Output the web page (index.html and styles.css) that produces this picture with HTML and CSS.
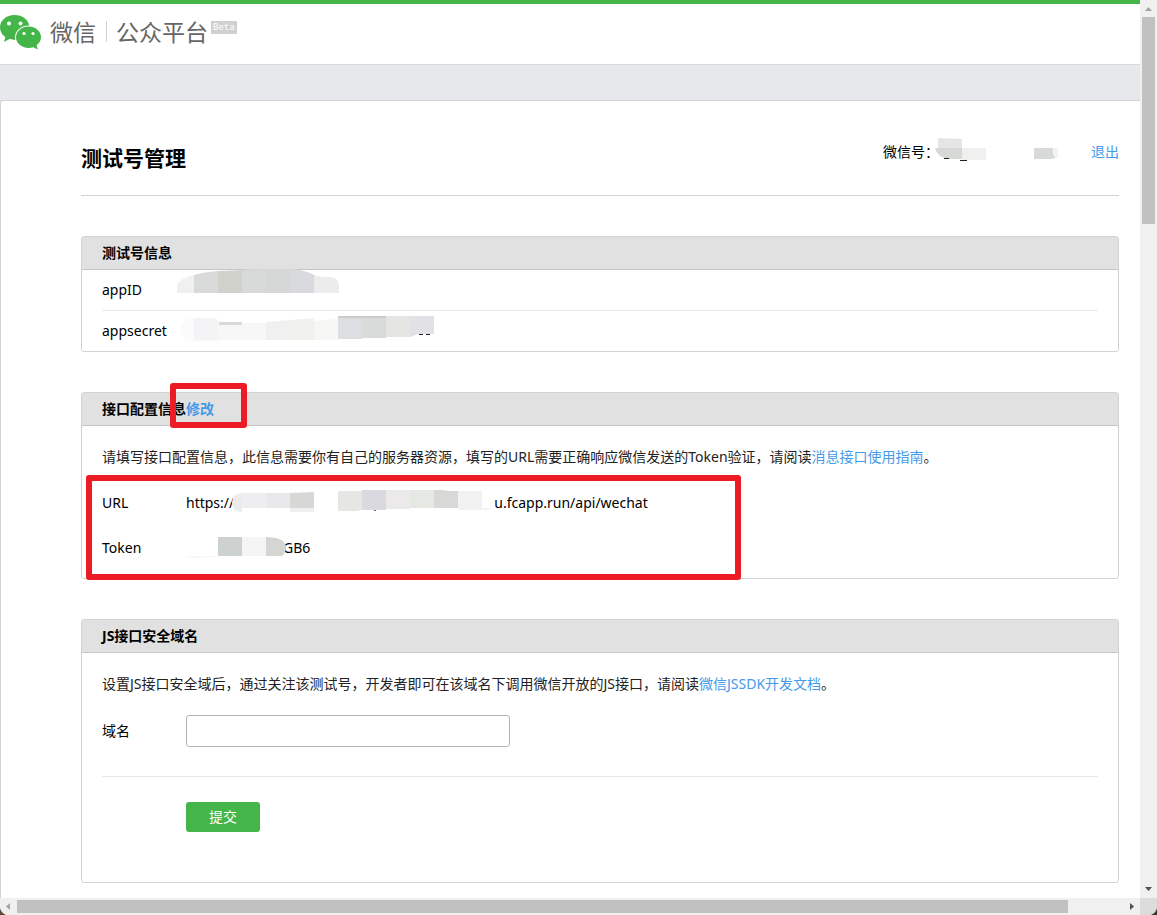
FILE: index.html
```html
<!DOCTYPE html>
<html lang="zh-CN">
<head>
<meta charset="utf-8">
<title>微信公众平台 - 测试号管理</title>
<link rel="stylesheet" href="styles.css">
</head>
<body>
<div class="window">
  <div class="viewport">
    <header class="topbar">
      <svg class="logo" width="41" height="35" viewBox="0 0 41 35" aria-hidden="true">
        <path class="logo-fill" d="M14.500 0C6.200 0 0 5.500 0 12.500c0 4 2.100 7.300 5.300 9.600L4 27l5.500-3c2 .6 3.500.8 5.500.8h1.500L29.500 11.500C28.500 4.500 22.500 0 14.500 0z"/>
        <path class="logo-fill logo-front" d="M28.500 11.500C21.500 11.500 16 16.400 16 22.300S21.500 33 28.500 33c1.700 0 3.200-.2 4.600-.7L37.800 34.500l-1.200-4.200c2.700-2 4.400-4.800 4.400-8C41 16.400 35.500 11.500 28.500 11.500z"/>
        <circle class="logo-eye" cx="9" cy="8.500" r="2"/><circle class="logo-eye" cx="20.500" cy="8.500" r="2"/>
        <circle class="logo-eye" cx="24" cy="18.500" r="1.600"/><circle class="logo-eye" cx="33" cy="18.500" r="1.600"/>
      </svg>
      <span class="brand">微信</span>
      <span class="product">公众平台</span>
      <span class="beta">Beta</span>
    </header>
    <main class="card">
      <div class="page-head">
        <h1>测试号管理</h1>
        <div class="account">
          <span>微信号：</span>
          <span class="account-id">
            <svg class="mask mask-account" width="124" height="26" viewBox="0 0 124 26" aria-hidden="true">
              <path fill="#e4e5e4" d="M3 1L27 2V22H14Q3 20 3 16z"/>
              <path fill="#d7d9d7" d="M0 11H27V22H14Q2 20 0 11z"/>
              <path fill="#f0f0ef" d="M27 11H51V23H27z"/>
              <path stroke="#222" d="M9 21.500h5M25 23.500h7"/>
              <path fill="#d8dad9" d="M99 11H118Q117 18 121 21L117 22H99z"/>
              <path fill="#f2f3f2" d="M118 11H123V21H121Q117 18 118 11z"/>
            </svg>
          </span>
          <a href="#logout">退出</a>
        </div>
      </div>

      <section class="panel">
        <h2>测试号信息</h2>
        <dl class="info">
          <div class="info-row">
            <dt>appID</dt>
            <dd>
              <svg class="mask mask-appid" width="166" height="26" viewBox="0 0 166 26" aria-hidden="true">
                <path fill="#f0f0f0" d="M1 24V17Q3 9 19 6V24z"/>
                <path fill="#d9dada" d="M18 6Q28 3 42 2V24H18z"/>
                <path fill="#d1d2cc" d="M42 2L66 1V24H42z"/>
                <path fill="#d8dada" d="M66 1Q78 0 90 0V24H66z"/>
                <path fill="#d5d8d7" d="M90 0H114V24H90z"/>
                <path fill="#d9dadd" d="M114 0Q130 1 138 6V24H114z"/>
                <path fill="#ececec" d="M138 6Q145 8 148 8Q163 6 163 18V24H138z"/>
              </svg>
            </dd>
          </div>
          <div class="info-row">
            <dt>appsecret</dt>
            <dd>
              <svg class="mask mask-secret" width="260" height="30" viewBox="0 0 260 30" aria-hidden="true">
                <path fill="#fbfbfb" d="M10 3H34Q43 5 40 12V27H14Q2 26 0 15Q2 5 10 3z"/>
                <path fill="#f4f4f7" d="M14 3H35L38 7V25H14z"/>
                <path fill="#f7f7f7" d="M38 8H86V25H38z"/>
                <path fill="#d9dadb" d="M39 7H62V10H39z"/>
                <path fill="#f0f0f0" d="M86 7L110 5V25H86z"/>
                <path fill="#f1f1ed" d="M110 5L134 3V25H110z"/>
                <path fill="#f6f6f4" d="M134 6L158 4V25H134z"/>
                <path fill="#dddee1" d="M158 1H182V24H158z"/>
                <path fill="#d9dbdb" d="M182 1H206V23H182z"/>
                <path fill="#e5e5e3" d="M206 1H230V22H206z"/>
                <path fill="#e1e1e6" d="M230 1H254V19H238L230 22z"/>
                <path stroke="#c9cbcd" stroke-width="2" d="M158 2H206"/>
                <path stroke="#222" d="M239 19.500h4M246 19.500h4"/>
              </svg>
            </dd>
          </div>
        </dl>
      </section>

      <section class="panel panel-config">
        <h2>接口配置信息<a class="edit" href="#edit">修改<span class="marker marker-edit"></span></a></h2>
        <div class="panel-body">
          <p>请填写接口配置信息，此信息需要你有自己的服务器资源，填写的URL需要正确响应微信发送的Token验证，请阅读<a href="#guide">消息接口使用指南</a>。</p>
          <dl class="config">
            <div class="field">
              <dt>URL</dt>
              <dd class="url">
                <span>https://</span>
                <span>u.fcapp.run/api/wechat</span>
                <svg class="mask mask-url" width="262" height="24" viewBox="0 0 262 24" aria-hidden="true">
                  <path fill="#ececec" d="M10 3V22Q0 22 0 12Q0 4 10 3z"/>
                  <path fill="#eeeef1" d="M10 3H34V18H10z"/>
                  <path fill="#e9e9eb" d="M34 3H58V18H34z"/>
                  <path fill="#d7d7d5" d="M58 3L82 2V18H58z"/>
                  <path fill="#edf0ef" d="M58 18H82V22H58z"/>
                  <path fill="#e6e6e4" d="M106 1H130V20L124 21H106z"/>
                  <path fill="#d9d9df" d="M130 0H154V20H130z"/>
                  <path fill="#ebe9ea" d="M154 0H178V19H154z"/>
                  <path fill="#e6e8e3" d="M178 0H202V18H178z"/>
                  <path fill="#d8d8d6" d="M202 0H210L218 1H226V18H202z"/>
                  <path fill="#f2f2f2" d="M226 1H250V18H260L254 20H226z"/>
                  <path fill="#3874a8" d="M142 20H144V21H142z"/>
                </svg>
              </dd>
            </div>
            <div class="field">
              <dt>Token</dt>
              <dd class="token">
                <span>GB6</span>
                <svg class="mask mask-token" width="103" height="24" viewBox="0 0 103 24" aria-hidden="true">
                  <path fill="#f7f7f7" d="M0 20H34V21L7 22z"/>
                  <path fill="#cdd2d0" d="M34 1H58V20H34z"/>
                  <path fill="#f5f5f6" d="M58 1H82V20H58z"/>
                  <path fill="#d5d6d4" d="M82 1Q101 1 102 11Q102 17 98 20H82z"/>
                </svg>
              </dd>
            </div>
            <div class="marker marker-fields"></div>
          </dl>
        </div>
      </section>

      <section class="panel">
        <h2>JS接口安全域名</h2>
        <form class="panel-body">
          <p>设置JS接口安全域后，通过关注该测试号，开发者即可在该域名下调用微信开放的JS接口，请阅读<a href="#jssdk">微信JSSDK开发文档</a>。</p>
          <div class="domain">
            <label for="domain">域名</label>
            <input id="domain" type="text">
          </div>
          <div class="actions">
            <button type="button">提交</button>
          </div>
        </form>
      </section>
    </main>
  </div>

  <div class="scroll scroll-v" aria-hidden="true">
    <svg width="17" height="17" viewBox="0 0 17 17"><path fill="#a3a3a3" d="M5 11L8.500 7L12 11z"/></svg>
    <div class="track"><div class="thumb"></div></div>
    <svg width="17" height="17" viewBox="0 0 17 17"><path fill="#505050" d="M5 6H12L8.500 10z"/></svg>
  </div>
  <div class="scroll scroll-h" aria-hidden="true">
    <svg width="17" height="17" viewBox="0 0 17 17"><path fill="#5b4a35" d="M0 10Q1 15 6 17H0z"/><path fill="#a3a3a3" d="M10 5V12L6 8.500z"/></svg>
    <div class="track"><div class="thumb"></div></div>
    <svg width="17" height="17" viewBox="0 0 17 17"><path fill="#505050" d="M7 5V12L11 8.500z"/></svg>
  </div>
  <svg class="corner" width="17" height="17" viewBox="0 0 17 17" aria-hidden="true"><path fill="#3b3234" d="M17 10Q16 15 11 17H17z"/></svg>
</div>
</body>
</html>
```
FILE: styles.css
```css
* {
  box-sizing: border-box;
}

body {
  margin: 0;
  font-family: "Noto Sans", "Noto Sans CJK SC", sans-serif;
  font-size: 14px;
  line-height: 20px;
  color: #000;
}

h1, h2, p, dl, dd {
  margin: 0;
}

a {
  color: #459ae9;
  text-decoration: none;
}

svg {
  display: block;
  flex: none;
}

.window {
  display: grid;
  grid-template-columns: minmax(0, 1fr) 17px;
  grid-template-rows: minmax(0, 1fr) 17px;
  height: 100vh;
}

.viewport {
  display: flex;
  flex-direction: column;
  overflow: hidden;
  background: #e7e8eb;
}

.topbar {
  display: flex;
  flex: none;
  align-items: flex-start;
  height: 65px;
  padding-top: 11px;
  border-top: 4px solid #44b549;
  border-bottom: 1px solid #d9dadc;
  background: #fff;
}

.logo-fill {
  fill: #44b549;
}

.logo-front {
  stroke: #fff;
  stroke-width: 2;
  paint-order: stroke;
}

.logo-eye {
  fill: #fff;
}

.brand, .product {
  font-family: "Noto Sans CJK SC", sans-serif;
  font-size: 23px;
  line-height: 32px;
  color: #666;
}

.brand {
  margin-left: 9px;
}

.product {
  display: flex;
  align-items: center;
}

.product::before {
  content: "";
  width: 1px;
  height: 21px;
  margin: 0 9px 0 10px;
  background: #d0d0d0;
}

.beta {
  margin: 6px 0 0 3px;
  padding: 0 2px;
  font-family: "DejaVu Sans Mono", monospace;
  font-size: 9px;
  line-height: 13px;
  color: #fff;
  background: #d0d0d0;
}

.card {
  flex: 1 0 auto;
  margin-top: 35px;
  padding: 36px 20px 40px 80px;
  border: 1px solid #d3d3d3;
  border-width: 1px 0 0 1px;
  border-radius: 3px 0 0 0;
  background: #fff;
}

.page-head {
  display: flex;
  justify-content: space-between;
  padding-bottom: 16px;
  border-bottom: 1px solid #d3d3d3;
  margin-right: 1px;
}

h1 {
  font-size: 21px;
  line-height: 42px;
}

.account {
  display: flex;
  line-height: 30px;
}

.account-id {
  position: relative;
  width: 152px;
}

.mask {
  position: absolute;
  top: 0;
  left: 0;
}

.mask-account {
  left: -4px;
}

.mask-appid {
  top: -1px;
}

.panel {
  margin: 40px 1px 0 0;
  border: 1px solid #d3d3d3;
  border-radius: 3px;
}

h2 {
  padding: 0 20px;
  font-size: 14px;
  line-height: 32px;
  border-bottom: 1px solid #c6c6c6;
  background: #e1e1e1;
}

.info {
  padding: 0 20px;
}

.info-row {
  display: flex;
  line-height: 40px;
}

.info-row + .info-row {
  border-top: 1px solid #e7e7eb;
}

.info-row dt {
  width: 74px;
}

.info-row dd {
  position: relative;
}

.mask-secret {
  top: 4px;
  left: 4px;
}

.edit {
  position: relative;
}

.marker {
  position: absolute;
  border: 6px solid #ed1c24;
  border-radius: 3px;
  pointer-events: none;
}

.marker-edit {
  top: -16px;
  left: -16px;
  width: 77px;
  height: 45px;
}

.panel-body {
  padding: 21px 20px 50px;
}

.panel-config .panel-body {
  padding-bottom: 20px;
}

.panel-body p {
  color: #222;
}

.config {
  position: relative;
  display: grid;
  gap: 25px;
  padding-top: 26px;
}

.marker-fields {
  top: 8px;
  left: -16px;
  width: 655px;
  height: 105px;
}

.field {
  display: flex;
}

.field dt, .domain label {
  width: 84px;
}

.field dd {
  position: relative;
  display: flex;
}

.url {
  gap: 260px;
}

.token {
  padding-left: 97px;
}

.mask-url {
  top: -3px;
  left: 46px;
}

.mask-token {
  top: -2px;
  left: -2px;
}

.domain {
  display: flex;
  align-items: center;
  padding: 21px 0 29px;
  border-bottom: 1px solid #e7e7eb;
}

input {
  width: 324px;
  height: 32px;
  padding: 0 8px;
  font: inherit;
  border: 1px solid #b5b5b5;
  border-radius: 3px;
  background: #fff;
}

.actions {
  padding: 25px 0 0 84px;
}

button {
  width: 74px;
  height: 30px;
  padding: 0;
  font: inherit;
  color: #fff;
  border: 0;
  border-radius: 3px;
  background: #44b549;
}

.scroll {
  display: flex;
  background: #f0f0f0;
}

.scroll-v {
  flex-direction: column;
}

.track {
  flex: 1;
}

.thumb {
  background: #c1c1c1;
}

.scroll-v .thumb {
  width: 13px;
  height: 24%;
  margin-left: 2px;
}

.scroll-h .thumb {
  width: 95%;
  height: 13px;
  margin-top: 2px;
}

.corner {
  background: #dcdcdc;
}
```
